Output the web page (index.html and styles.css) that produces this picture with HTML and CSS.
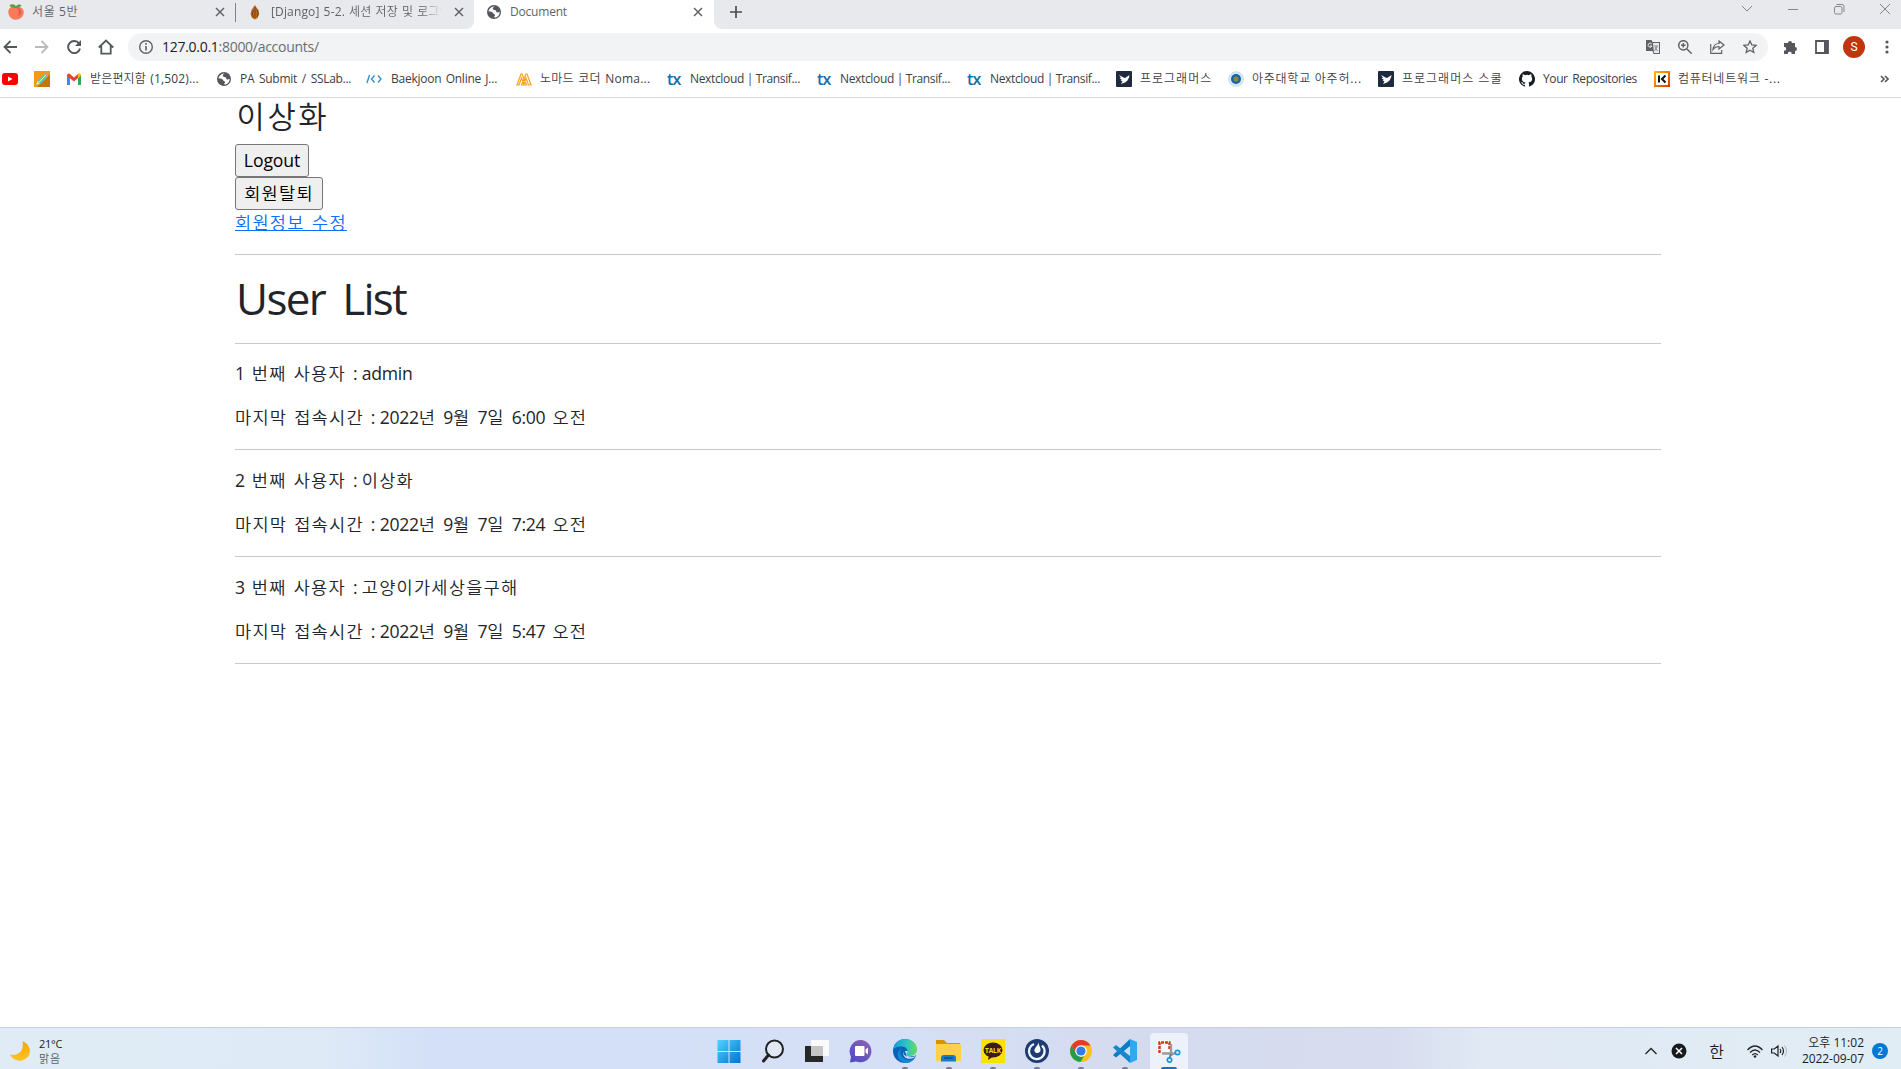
FILE: index.html
```html
<!DOCTYPE html>
<html lang="ko">
<head>
<meta charset="utf-8">
<title>Document</title>
<link rel="stylesheet" href="styles.css">
</head>
<body>
<svg class="defs" width="0" height="0" aria-hidden="true">
  <symbol id="close" viewBox="0 0 10 10"><path d="M1 1l8 8M9 1L1 9" fill="none" stroke="#5f6368" stroke-width="1.5"/></symbol>
  <symbol id="globe" viewBox="0 0 14 14"><circle cx="7" cy="7" r="7" fill="#54585d"/><path d="M7.800 1.400C6 2 5.200 3.500 6.300 4.600c1.200 1 2.800.4 3 1.800.2 1.600 2.200 1.200 3.300.4.200 3-1.900 5.700-5 5.800l-.5-1.200c1.600-.5 1.200-2-.2-2.400-1-.3-1-2-2.600-2.200L1.500 6.200C2.100 3.600 4.600 1.200 7.800 1.400z" fill="#fff"/></symbol>
  <symbol id="bird" viewBox="0 0 16 16"><rect width="16" height="16" rx="1" fill="#1e2a3e"/><path d="M3 4l4.500 2.500L9 7l4.500-3-.5 2.500-1.500 3-2.500 2-4 1.500 1.500-2.500L4.500 9.500 6 9 3.500 7.200 5 7z" fill="#fff"/></symbol>
</svg>
<div class="screen">
  <header class="browser">
    <div class="tabs">
      <div class="tab tab-first">
        <svg width="16" height="16" viewBox="0 0 16 16"><path d="M8 3.500C4 1.500 0 4 .3 8.500c.3 4 3.500 7.200 7.200 7.200 4.300 0 7.600-2.700 8.200-6.700C16.200 5 12.500 1.500 8 3.500z" fill="#f97b5b"/><path d="M8 3.500c3 1 3.500 6 1.800 9 5-2 4.500-8.500-1.800-9z" fill="#e65b50"/><path d="M8 4C5.500 4.200 2.500 3.500 1.300 1.300 4-.3 7 0 8 2.500c1-2.200 3.500-2.500 5.500-1.200C12.500 3.500 10.500 4 8 4z" fill="#5c9e4c"/></svg>
        <span class="t1">서울 5반</span><svg class="x" width="10" height="10"><use href="#close"/></svg>
      </div>
      <i class="tab-rule"></i>
      <div class="tab tab-second">
        <svg width="16" height="16" viewBox="0 0 16 16"><path d="M8 1l1.500 2.500 2 2.500.8 4-1.800 4L8 15.500 5 14l-1.500-4L4.500 6l2-3z" fill="#b56a1c"/><path d="M8 3v11M6.300 6l-1 4 1 3M10 5.500l1 4-1 3.500" stroke="#7d4410" fill="none"/></svg>
        <span class="t2">[Django] 5-2. 세션 저장 및 로그인</span><svg class="x" width="10" height="10"><use href="#close"/></svg>
      </div>
      <div class="tab tab-active">
        <svg width="14" height="14"><use href="#globe"/></svg>
        <span class="t3">Document</span><svg class="x" width="10" height="10"><use href="#close"/></svg>
      </div>
      <div class="strip">
        <svg width="12" height="12" viewBox="0 0 12 12"><path d="M6 0v12M0 6h12" stroke="#4b4f54" stroke-width="1.700"/></svg>
        <div class="window-buttons">
          <svg width="12" height="12" viewBox="0 0 12 12"><path d="M1 3l5 5 5-5"/></svg>
          <svg width="12" height="12" viewBox="0 0 12 12"><path d="M1 6.500h10"/></svg>
          <svg width="12" height="12" viewBox="0 0 12 12"><rect x="1.500" y="3.500" width="7.500" height="7.500" rx="1.500"/><path d="M3.500 1.500H9a2 2 0 0 1 2 2V9"/></svg>
          <svg width="12" height="12" viewBox="0 0 12 12"><path d="M1 1l10 10M11 1L1 11"/></svg>
        </div>
      </div>
    </div>
    <div class="toolbar">
      <div class="nav">
        <svg width="14" height="14" viewBox="0 0 14 14"><path d="M14 7H1.500M7.500 1l-6 6 6 6" fill="none" stroke="#54585d" stroke-width="1.800"/></svg>
        <svg width="14" height="14" viewBox="0 0 14 14"><path d="M0 7h12.500M6.500 1l6 6-6 6" fill="none" stroke="#b9bbbe" stroke-width="1.800"/></svg>
        <svg width="14" height="14" viewBox="0 0 14 14"><path d="M12 3.500A6 6 0 1 0 13 8.500" fill="none" stroke="#54585d" stroke-width="1.900"/><path d="M14 0v6H8z" fill="#54585d"/></svg>
        <svg width="16" height="16" viewBox="0 0 16 16"><path d="M.8 8.500L8 1.500l7.200 7M3.300 7v7.700h9.400V7" fill="none" stroke="#54585d" stroke-width="1.800"/></svg>
      </div>
      <div class="omnibox">
        <svg width="14" height="14" viewBox="0 0 14 14"><circle cx="7" cy="7" r="6.300" fill="none" stroke="#5f6368" stroke-width="1.400"/><path d="M7 6v4.500M7 3v1.700" stroke="#5f6368" stroke-width="1.600"/></svg>
        <span class="url"><b>127.0.0.1</b>:8000/accounts/</span>
        <div class="box-actions">
          <svg width="14" height="14" viewBox="0 0 14 14"><path d="M0 0h5.500l1 2H14v12H7.500l-1-3H0z" fill="#5f6368"/><path d="M7 3h6v10H8z" fill="#e7e8e9"/><path d="M5.800 4A2 2 0 1 0 6 6H4" stroke="#f1f3f4" fill="none"/><path d="M8 6h4M8.500 11l3-5M9 7l2.500 4" stroke="#888b8f" fill="none"/></svg>
          <svg width="14" height="14" viewBox="0 0 14 14"><path d="M8.700 8.700l5 5M5.300 3v4.600M3 5.300h4.600" stroke="#5f6368" stroke-width="1.500"/><circle cx="5.300" cy="5.300" r="4.600" fill="none" stroke="#5f6368" stroke-width="1.500"/></svg>
          <svg width="15" height="14" viewBox="0 0 15 14"><path d="M.7 4v9.300h11V10M9 1l5 4-5 4V6.500c-3 0-4.500 1-6 3 .5-4 3-6 6-6z" fill="none" stroke="#5f6368" stroke-width="1.200"/></svg>
          <svg width="14" height="14" viewBox="0 0 14 14"><path d="M7 1l1.800 4 4.300.4-3.300 2.900 1 4.200L7 10.300l-3.800 2.200 1-4.200L.9 5.400 5.200 5z" fill="none" stroke="#5f6368" stroke-width="1.300"/></svg>
        </div>
      </div>
      <div class="tools">
        <svg width="15" height="15" viewBox="0 0 15 15"><path d="M1 3h4a2 2 0 1 1 4 0h3v4a2 2 0 1 1 0 4v3H8.500a1.800 1.800 0 1 0-3.500 0H1v-3.500a1.800 1.800 0 1 0 0-3.500z" fill="#54585d"/></svg>
        <svg width="14" height="14" viewBox="0 0 14 14"><path d="M1 1h12v12H1z" fill="none" stroke="#54585d" stroke-width="1.800"/><path d="M9 1h4v12H9z" fill="#54585d"/></svg>
        <span class="avatar">S</span>
        <svg width="4" height="14" viewBox="0 0 4 14"><g fill="#54585d"><circle cx="2" cy="2" r="1.600"/><circle cx="2" cy="7" r="1.600"/><circle cx="2" cy="12" r="1.600"/></g></svg>
      </div>
    </div>
    <nav class="bookmarks">
      <a><svg width="16" height="12" viewBox="0 0 16 12"><rect width="16" height="12" rx="3" fill="#f00"/><path d="M6 3.500v5L10.500 6z" fill="#fff"/></svg></a>
      <a><svg width="16" height="16" viewBox="0 0 16 16"><path d="M0 0h16v16H0z" fill="#f29a18"/><path d="M16 3v13H3z" fill="#c87508"/><path d="M2 14l1.500-4 7-7 3 3-7 7z" fill="#55c9c9"/><path d="M2 14l1.500-4 2.500 2.500z" fill="#f7dfac"/><path d="M10.500 3l1.500-1 2.500 2.500-1 1.500z" fill="#e58bb4"/><path d="M5 11l7-7" stroke="#e5f29c"/></svg></a>
      <a><svg width="16" height="12" viewBox="0 0 16 12"><path d="M1 2v10h3V5z" fill="#4285f4"/><path d="M12 5v7h3V2z" fill="#34a853"/><path d="M1 2.500C1 .5 3-.2 4 1l4 3.500L12 1v4L8 8.500 1 3z" fill="#ea4335"/><path d="M12 5V1c1.500-1.500 3-.3 3 1.500z" fill="#fbbc04"/></svg><span class="b1">받은편지함 (1,502)...</span></a>
      <a><svg width="16" height="14" viewBox="0 0 14 14"><use href="#globe"/></svg><span class="b2">PA Submit / SSLab...</span></a>
      <a><svg width="16" height="10" viewBox="0 0 16 10"><path d="M3.500 1L1 9M8.500 1.500L5.500 5l3 3.500M12 1.500L15 5l-3 3.500" fill="none" stroke="#3990ce" stroke-width="1.400"/></svg><span class="b3">Baekjoon Online J...</span></a>
      <a><svg width="16" height="13" viewBox="0 0 16 13"><path d="M1 12L5 1h1l4.500 11H8.200L5.500 5 3 12zM5.500 12L10 1h1l4 11h-2.500L10 5l-2.300 7z" fill="none" stroke="#f9a11b" stroke-width="1.200"/></svg><span class="b4">노마드 코더 Noma...</span></a>
      <a><span class="tx">tx</span><span class="b5">Nextcloud | Transif...</span></a>
      <a><span class="tx">tx</span><span class="b5">Nextcloud | Transif...</span></a>
      <a><span class="tx">tx</span><span class="b5">Nextcloud | Transif...</span></a>
      <a><svg width="16" height="16"><use href="#bird"/></svg><span class="b6">프로그래머스</span></a>
      <a><svg width="16" height="16" viewBox="0 0 16 16"><circle cx="8" cy="8" r="7.300" fill="#d9e8f5" stroke="#9fc1df" stroke-dasharray="1 1"/><circle cx="8" cy="8" r="5" fill="#0c65ad"/><circle cx="8" cy="8" r="2.700" fill="#8b8545"/></svg><span class="b7">아주대학교 아주허...</span></a>
      <a><svg width="16" height="16"><use href="#bird"/></svg><span class="b8">프로그래머스 스쿨</span></a>
      <a><svg width="16" height="16" viewBox="0 0 16 16"><path d="M8 0a8 8 0 0 0-2.530 15.590c.4.070.55-.17.550-.38v-1.490c-2.010.37-2.530-.49-2.690-.94-.09-.23-.48-.94-.82-1.130-.28-.15-.68-.52-.01-.53.630-.01 1.080.58 1.230.82.720 1.210 1.870.87 2.330.66.070-.52.280-.87.510-1.070-1.780-.2-3.640-.89-3.640-3.950 0-.87.310-1.590.820-2.150-.08-.2-.36-1.020.080-2.120 0 0 .67-.21 2.200.82a7.400 7.400 0 0 1 4 0c1.530-1.040 2.200-.82 2.200-.82.440 1.100.16 1.920.080 2.120.51.560.820 1.270.820 2.150 0 3.070-1.870 3.750-3.650 3.950.29.250.540.730.540 1.480v2.200c0 .21.150.46.550.38A8 8 0 0 0 8 0z" fill="#1b1f23"/></svg><span class="b9">Your Repositories</span></a>
      <a><svg width="16" height="16" viewBox="0 0 16 16"><defs><linearGradient id="ko" x2="1" y2="1"><stop stop-color="#fbb800"/><stop offset="1" stop-color="#e03e00"/></linearGradient></defs><rect x="1" y="1" width="14" height="14" fill="#fff" stroke="url(#ko)" stroke-width="2"/><path d="M5 4.500v7M11.500 4.500L8 8l3.500 3.500" fill="none" stroke="#111" stroke-width="2"/></svg><span class="b10">컴퓨터네트워크 -...</span></a>
      <svg class="more" width="9" height="8" viewBox="0 0 9 8"><path d="M1 1l3 3-3 3M5 1l3 3-3 3" fill="none" stroke="#54585d" stroke-width="1.600"/></svg>
    </nav>
  </header>
  <main class="page">
    <div class="container">
      <h3>이상화</h3>
      <div class="form"><button class="logout">Logout</button></div>
      <div class="form"><button class="leave">회원탈퇴</button></div>
      <div class="edit"><a>회원정보 수정</a></div>
      <hr>
      <h1>User List</h1>
      <hr>
      <p><span>1</span> 번째 사용자 <span>: admin</span></p>
      <p>마지막 접속시간 <span>: 2022</span>년 <span>9</span>월 <span>7</span>일 <span>6:00</span> 오전</p>
      <hr>
      <p><span>2</span> 번째 사용자 <span>: </span>이상화</p>
      <p>마지막 접속시간 <span>: 2022</span>년 <span>9</span>월 <span>7</span>일 <span>7:24</span> 오전</p>
      <hr>
      <p><span>3</span> 번째 사용자 <span>: </span>고양이가세상을구해</p>
      <p>마지막 접속시간 <span>: 2022</span>년 <span>9</span>월 <span>7</span>일 <span>5:47</span> 오전</p>
      <hr>
    </div>
  </main>
  <footer class="taskbar">
    <div class="weather">
      <svg width="20" height="20" viewBox="0 0 20 20"><defs><linearGradient id="moon" x2="0" y2="1"><stop stop-color="#f6a500"/><stop offset="1" stop-color="#ffc329"/></linearGradient></defs><path d="M12.500 0C22 4 22 15 14.500 18.500 8.500 21.500 2.500 18.500 0 13.500 8 15.500 14.500 10 12.500 0z" fill="url(#moon)"/></svg>
      <div><span class="temp">21°C</span><span class="sky">맑음</span></div>
    </div>
    <div class="apps">
      <div class="app"><svg width="24" height="24" viewBox="0 0 24 24"><defs><linearGradient id="win" x2="1" y2="1"><stop stop-color="#4fd2ff"/><stop offset="1" stop-color="#0074d2"/></linearGradient></defs><path d="M.5 1h11v11H.5zM12.500 1h11v11h-11zM.5 13h11v11H.5zM12.500 13h11v11h-11z" fill="url(#win)"/></svg></div>
      <div class="app"><svg width="24" height="24" viewBox="0 0 24 24"><circle cx="13.500" cy="10" r="8.500" fill="#e2e8f3" stroke="#222" stroke-width="2"/><path d="M7.500 16L2.500 22" stroke="#222" stroke-width="3" stroke-linecap="round"/></svg></div>
      <div class="app"><svg width="24" height="24" viewBox="0 0 24 24"><path d="M0 7h18v16H0z" fill="#282828"/><path d="M6 1h18v16H6z" fill="#fafafa"/><path d="M6 7h12v10H6z" fill="#c5c5c5"/></svg></div>
      <div class="app"><svg width="24" height="24" viewBox="0 0 24 24"><defs><linearGradient id="teams" x1="1" x2="0" y2="1"><stop stop-color="#9264b5"/><stop offset="1" stop-color="#494bc2"/></linearGradient></defs><path d="M12.500 1A11.200 11.200 0 1 1 7 22.500L1 23.500l1-6A11.200 11.200 0 0 1 12.500 1z" fill="url(#teams)"/><rect x="6" y="7" width="9.500" height="10" rx="1" fill="#fff"/><path d="M16.500 10.500L19 8.500v7l-2.500-2z" fill="#fff"/></svg></div>
      <div class="app"><svg width="24" height="24" viewBox="0 0 24 24"><defs><linearGradient id="edge" x2="1"><stop stop-color="#149bdc"/><stop offset=".6" stop-color="#31c6c0"/><stop offset="1" stop-color="#66df55"/></linearGradient></defs><circle cx="12" cy="12" r="12" fill="#0b63b8"/><path d="M12 12h12v4l-3 1-7 1z" fill="#d7e0f4"/><path d="M.2 11C1 4 6 0 12 0c7 0 12 5 12 10.500 0 5-4 6.500-7.500 6.500-3 0-4-1.500-2.500-3 2-3-1-6.500-5.500-6.500C4 7.500 1 9 .2 11z" fill="url(#edge)"/><path d="M9 9c-4 5 0 12 7 12 3 0 4.500-.8 6.500-2.500C19 23.500 14 25 10 23 4 21 2.500 13 9 9z" fill="#1388d5"/><path d="M10.500 11.500c-1 4.500 3.500 7.500 8 6.700l3-.7 1.500-.5c-1.500 2-5 3.500-8.500 2.500s-5-4-4-8z" fill="#dce7f5"/></svg><i class="dot"></i></div>
      <div class="app"><svg width="26" height="24" viewBox="0 0 26 24"><path d="M0 1h8l3 3h13v8H0z" fill="#d79300"/><path d="M0 5h24a1 1 0 0 1 1 1v16H1a1 1 0 0 1-1-1z" fill="#ffd04b"/><path d="M5 22.500V19q0-3 3-3h9q3 0 3 3v3.500z" fill="#147cc9"/><path d="M8 19h9" stroke="#065b9c" stroke-width="2"/></svg><i class="dot"></i></div>
      <div class="app"><svg width="24" height="24" viewBox="0 0 24 24"><path d="M0 0h24v24H0z" fill="#fae100"/><ellipse cx="12" cy="11" rx="9.500" ry="7.500" fill="#371d1e"/><path d="M8 16l-1 5 6-4z" fill="#371d1e"/><text x="12" y="13.500" text-anchor="middle" class="talk">TALK</text></svg><i class="dot"></i></div>
      <div class="app"><svg width="24" height="24" viewBox="0 0 24 24"><circle cx="12" cy="12" r="12" fill="#1e3c72"/><path d="M9 5A7.800 7.800 0 1 0 17 6.500" fill="none" stroke="#f4f6fa" stroke-width="2.300"/><path d="M13.500 3.500c0 3 2.500 5 2 8-.5 3-5 3.500-6 .5-.8-2.500 3-4.500 4-8.500z" fill="#fff"/></svg><i class="dot"></i></div>
      <div class="app"><svg width="24" height="24" viewBox="0 0 24 24"><circle cx="12" cy="12" r="11" fill="#fbc116"/><path d="M2.500 6.500A11 11 0 0 1 21.500 6.500H12L7.200 14.800z" fill="#e33b2e"/><path d="M2.500 6.500l4.700 8.300c2 3 5 3.200 7.800 2.200L11.500 23A11 11 0 0 1 2.500 6.500z" fill="#229b4b"/><circle cx="12" cy="12" r="5.800" fill="#fff"/><circle cx="12" cy="12" r="4.600" fill="#307cec"/></svg><i class="dot"></i></div>
      <div class="app"><svg width="24" height="24" viewBox="0 0 24 24"><path d="M17 0v7L3 18.500 0 16z" fill="#087cc4"/><path d="M0 8.500L3 6l14 11v7z" fill="#1687cc"/><path d="M17 0l7 3v18l-7 3z" fill="#31a8ef"/></svg><i class="dot"></i></div>
      <div class="app selected"><svg width="24" height="24" viewBox="0 0 24 24"><path d="M0 1h15v15H0z" fill="#f8f8f8"/><path d="M2.500 14V3.500h10V11" fill="none" stroke="#d33a12" stroke-width="2.500" stroke-dasharray="3 1"/><path d="M14 5v11l6-3M5 14.500h11" fill="none" stroke="#969ba0" stroke-width="2.300"/><path d="M14 15l-1.500 4" stroke="#6b7b88" stroke-width="2"/><circle cx="20.500" cy="13.500" r="2.200" fill="#dff4ff" stroke="#1997df" stroke-width="1.700"/><circle cx="12.500" cy="21" r="2.200" fill="#dff4ff" stroke="#1997df" stroke-width="1.700"/></svg><i class="dot"></i></div>
    </div>
    <div class="tray">
      <svg width="12" height="8" viewBox="0 0 12 8"><path d="M.5 7L6 1.500 11.500 7" fill="none" stroke="#222" stroke-width="1.300"/></svg>
      <svg width="16" height="16" viewBox="0 0 16 16"><circle cx="8" cy="8" r="7.500" fill="#181b1e"/><path d="M5 5l6 6M11 5l-6 6" stroke="#fff" stroke-width="1.500"/></svg>
      <span class="ime">한</span>
      <svg width="16" height="13" viewBox="0 0 16 13"><path d="M.5 5Q8-3 15.500 5M3 7.500q5-5 10 0M5.200 10q2.800-2.700 5.600 0" fill="none" stroke="#252525" stroke-width="1.300"/><circle cx="8" cy="11.500" r="1.300" fill="#252525"/></svg>
      <svg width="16" height="14" viewBox="0 0 16 14"><path d="M.6 5v4h2.700L7 12V2L3.300 5zM9 5q1.500 2 0 4M11 3q3 4 0 8" fill="none" stroke="#222" stroke-width="1.200"/><path d="M13.500 1.500q4 5.500 0 11" fill="none" stroke="#b1b8bf"/></svg>
      <div class="clock"><span class="hour">오후 11:02</span><span class="date">2022-09-07</span></div>
      <span class="count">2</span>
    </div>
  </footer>
</div>
</body>
</html>
```
FILE: styles.css
```css
* { box-sizing: border-box; }
body { margin: 0; background: #fff; font-family: "Open Sans", "Noto Sans CJK KR DemiLight", "Noto Sans CJK KR", sans-serif; }
svg { display: block; flex: none; }
.defs { position: absolute; }
.screen { display: grid; grid-template-rows: 98px 1fr 42px; height: 1069px; width: 1901px; overflow: hidden; }

/* browser window */
.browser { border-bottom: 1px solid #d9dbde; color: #3c4043; font-size: 12px; white-space: nowrap; }
.tabs { display: flex; height: 29px; background: #fff; }
.tab { display: flex; align-items: center; height: 29px; padding: 0 0 5px; background: #e8e9ed; color: #5f6368; }
.tab span { flex: 1; overflow: hidden; line-height: 20px; }
.tab-first { width: 235px; padding-left: 8px; gap: 8px; padding-right: 10px; }
.tab-rule { width: 1px; height: 29px; background: linear-gradient(#e8e9ed 3px, #808387 3px 22px, #e8e9ed 22px); }
.tab-second { width: 238px; padding-left: 11px; gap: 8px; padding-right: 10px; border-radius: 0 0 8px 0; }
.tab-second span { margin-right: 4px; mask-image: linear-gradient(90deg, #000 88%, transparent); }
.tab-active { width: 240px; padding-left: 13px; gap: 9px; padding-right: 11px; background: #fff; }
.t1 { letter-spacing: .6px; }
.t2 { letter-spacing: .15px; word-spacing: .8px; }
.t3 { letter-spacing: -.2px; }
.strip { flex: 1; display: flex; justify-content: space-between; padding: 6px 10px 0 16px; background: #e8e9ed; border-radius: 0 0 0 8px; }
.window-buttons { display: flex; gap: 34px; margin-top: -3px; }
.window-buttons svg { fill: none; stroke: #85878a; stroke-width: 1; }
.toolbar { display: flex; align-items: center; height: 36px; }
.nav { display: flex; align-items: center; gap: 18px; width: 128px; padding-left: 3px; }
.nav svg:last-child { margin-left: -1px; }
.omnibox { display: flex; align-items: center; width: 1640px; height: 28px; padding: 0 11px; border-radius: 14px; background: #f1f3f4; }
.url { margin: -1px 0 0 9px; font-size: 14px; color: #6a6d71; letter-spacing: -.28px; }
.url b { font-weight: 400; color: #202124; }
.box-actions { display: flex; gap: 18px; margin-left: auto; }
.tools { display: flex; align-items: center; margin-left: 15px; gap: 17px; }
.avatar { width: 22px; height: 22px; border-radius: 50%; background: #bf360c; color: #fff; text-align: center; line-height: 22px; margin: 0 3px 0 -3px; font-family: Roboto, sans-serif; }
.bookmarks { display: grid; grid-template-columns: 32px 32px 150px 150px 150px 150px 150px 150px 150px 112px 150px 141px 135px 1fr 21px; align-items: center; height: 28px; padding-left: 2px; }
.bookmarks a { display: flex; align-items: center; gap: 8px; }
.bookmarks span { line-height: 20px; }
.bookmarks .tx { width: 15px; margin-left: 1px; font: 600 16px/16px "Open Sans", sans-serif; color: #106fb0; letter-spacing: -.9px; }
.b1 { letter-spacing: .15px; word-spacing: 1px; }
.b2 { letter-spacing: -.3px; word-spacing: 2px; }
.b3 { margin-left: 1px; letter-spacing: -.25px; word-spacing: 1.500px; }
.b4 { letter-spacing: .25px; word-spacing: 1px; }
.b5 { letter-spacing: -.35px; }
.b6, .b8 { letter-spacing: 1px; }
.b7, .b10 { letter-spacing: .75px; }
.b9 { letter-spacing: -.4px; word-spacing: 2px; }

/* page at 110% zoom */
.page { color: #212529; font-size: 17.6px; line-height: 26.4px; }
.container { width: 1426px; margin-left: 235px; }
.page h3, .page h1, .page p, .page hr { margin: 0; font-weight: 400; }
.page h3 { padding-left: 1.500px; font-size: 30.8px; line-height: 37px; margin-bottom: 8.8px; letter-spacing: 2.600px; }
.page h1 { padding-left: 1px; font-size: 44px; line-height: 52.8px; letter-spacing: -1.700px; word-spacing: 7.500px; }
.page hr { border: 0; height: 1px; background: #c8c9ca; margin: 17.6px 0; }
.page p { height: 26.45px; margin: 17.6px 0; line-height: 24px; letter-spacing: 1.200px; word-spacing: 1.300px; }
.page p span { letter-spacing: -.3px; word-spacing: .3px; }
.form { height: 33px; }
button { display: block; height: 33px; padding: 0; border: 1px solid #767676; border-radius: 3px; background: #efefef; color: #000; font: 17.6px/31px "Open Sans", "Noto Sans CJK KR DemiLight", "Noto Sans CJK KR", sans-serif; }
.logout { width: 74px; letter-spacing: -.1px; }
.leave { width: 88px; padding-bottom: 3px; letter-spacing: 1.200px; }
.edit { height: 26.4px; line-height: 25px; letter-spacing: 1.250px; word-spacing: 1.500px; }
.edit a { color: #0d6efd; text-decoration: underline; }

/* taskbar */
.taskbar { display: grid; grid-template-columns: 710px 1fr auto; border-top: 1px solid #c6d0de; background: linear-gradient(90deg, #e0ecf5 0, #deeaf6 17%, #d3e0f8 23%, #d5e0f6 45%, #d5dbef 60%, #d7dcee 73%, #e0e9f4 78%, #e1edf5); color: #1b1b1b; font-size: 11px; }
.weather { display: flex; gap: 9px; padding: 13px 0 0 10px; }
.weather span { display: block; line-height: 15px; }
.weather div { margin-top: -5px; }
.temp { letter-spacing: -.3px; }
.sky { color: #555c63; letter-spacing: .8px; }
.apps { display: flex; gap: 6px; padding-top: 5px; }
.app { display: flex; flex-direction: column; align-items: center; width: 38px; height: 36px; padding-top: 6px; border-radius: 4px 4px 0 0; }
.selected { background: #ecf1fa; }
.dot { width: 6px; height: 2px; margin-top: 4px; border-radius: 2px 2px 0 0; background: #777c84; }
.selected .dot { width: 16px; background: #0b73cf; }
.talk { font: 700 6.500px "Open Sans", sans-serif; fill: #fae100; }
.tray { display: flex; align-items: center; padding: 5px 13px 0 0; }
.tray svg:nth-child(2) { margin-left: 14px; }
.ime { margin-left: 22px; font-size: 16px; }
.tray svg:nth-of-type(3) { margin-left: 23px; }
.tray svg:nth-of-type(4) { margin-left: 8px; }
.clock { width: 64px; margin-left: 13px; text-align: right; font-size: 12px; }
.clock span { display: block; line-height: 16px; white-space: nowrap; }
.date { letter-spacing: -.05px; }
.count { width: 16px; height: 16px; margin-left: 8px; border-radius: 50%; background: #0078d4; color: #fff; line-height: 16px; text-align: center; font-size: 10px; }
```
